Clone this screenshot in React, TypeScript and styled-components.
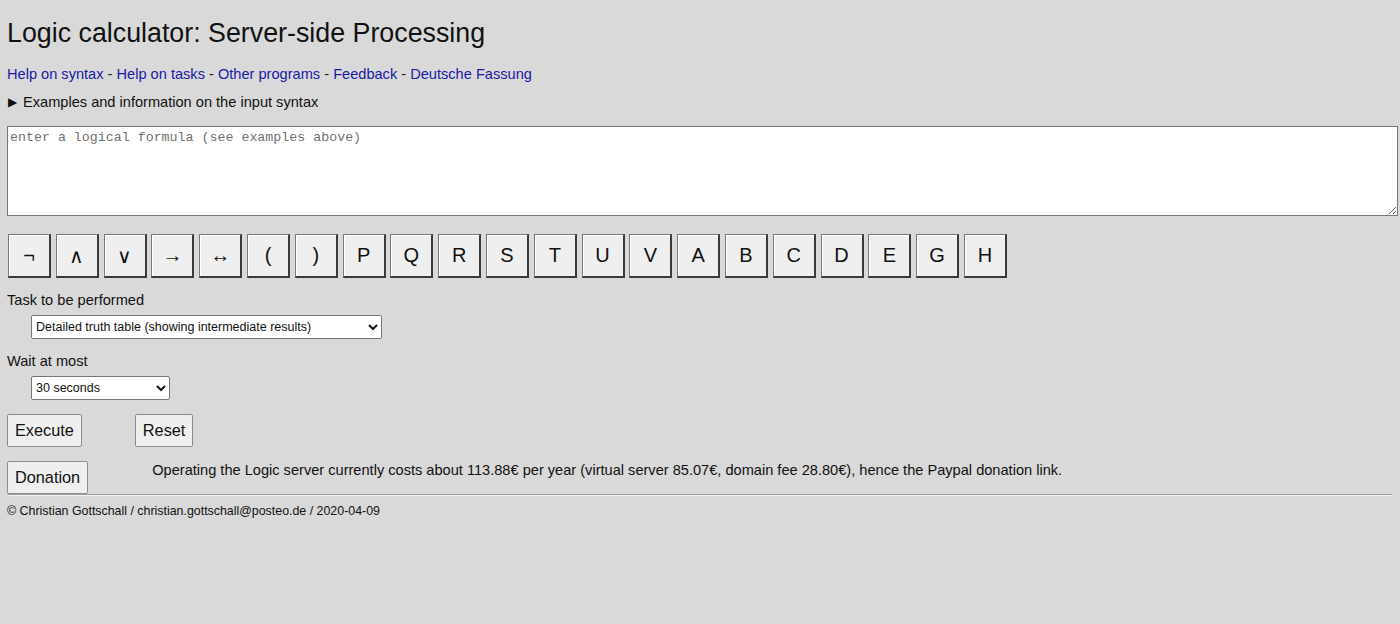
import React from "react";
import styled, { createGlobalStyle } from "styled-components";

const Global = createGlobalStyle`
  html, body { margin: 0; padding: 0; background: #d9d9d9; }
  body { font-family: "Liberation Sans", Arial, sans-serif; color: #111; }
`;

const Page = styled.div`
  padding: 17px 2px 20px 7px;
  display: flex;
  flex-direction: column;
`;

const Title = styled.h1`
  margin: 0;
  font-size: 26.8px;
  font-weight: normal;
  line-height: 32px;
  color: #111;
`;

const Links = styled.div`
  margin-top: 16px;
  font-size: 14.6px;
  line-height: 18px;
  color: #222;
`;

const A = styled.a`
  color: #1a1aa6;
  text-decoration: none;
`;

const Summary = styled.div`
  margin-top: 10px;
  font-size: 14.6px;
  line-height: 18px;
  display: flex;
  align-items: center;
  gap: 6px;
  padding-left: 1px;
`;

const Tri = styled.span`
  font-size: 11.5px;
  line-height: 18px;
  color: #111;
`;

const Area = styled.textarea`
  margin-top: 15px;
  height: 90px;
  box-sizing: border-box;
  width: 100%;
  border: 1px solid #767676;
  background: #fff;
  padding: 3px 2px;
  font-family: "Liberation Mono", "DejaVu Sans Mono", monospace;
  font-size: 13.3px;
  line-height: 16px;
  resize: vertical;
  &::placeholder { color: #6f6f6f; }
`;

const Keys = styled.div`
  margin-top: 18px;
  display: flex;
  gap: 4.8px;
  padding-left: 1px;
`;

const Key = styled.button`
  width: 43px;
  height: 44px;
  box-sizing: border-box;
  background: #efefef;
  border-style: solid;
  border-width: 1px 2px 2px 1px;
  border-color: #7a7a7a #3a3a3a #3a3a3a #7a7a7a;
  box-shadow: inset 1px 1px 0 #fff;
  font-family: "Liberation Sans", Arial, sans-serif;
  font-size: 20px;
  color: #111;
  padding: 0;
  display: flex;
  align-items: center;
  justify-content: center;
`;

const Label = styled.div`
  margin-top: 13px;
  font-size: 14.6px;
  line-height: 18px;
`;

const Select = styled.select<{ $w: number }>`
  margin: 6px 0 0 24px;
  width: ${(p) => p.$w}px;
  height: 24px;
  box-sizing: border-box;
  font-family: "Liberation Sans", Arial, sans-serif;
  font-size: 12.5px;
  border: 1px solid #767676;
  border-radius: 2px;
  background: #fff;
  color: #111;
  padding: 0;
`;

const Row = styled.div<{ $gap: number; $top: number }>`
  margin-top: ${(p) => p.$top}px;
  display: flex;
  align-items: flex-start;
  gap: ${(p) => p.$gap}px;
`;

const Btn = styled.button`
  height: 33px;
  box-sizing: border-box;
  background: #efefef;
  border: 1px solid #8d8d8d;
  border-radius: 2px;
  padding: 0 7px;
  font-family: "Liberation Sans", Arial, sans-serif;
  font-size: 16.3px;
  color: #111;
`;

const Note = styled.div`
  font-size: 14.6px;
  line-height: 18px;
`;

const Rule = styled.hr`
  margin: 0 6px 0 0;
  border: none;
  border-top: 1px solid #a0a0a0;
  border-bottom: 1px solid #eeeeee;
`;

const Footer = styled.div`
  margin-top: 7px;
  font-size: 12.4px;
  line-height: 16px;
`;

const keys = ["¬", "∧", "∨", "→", "↔", "(", ")", "P", "Q", "R", "S", "T", "U", "V", "A", "B", "C", "D", "E", "G", "H"];

export default function App() {
  return (
    <>
      <Global />
      <Page>
        <Title>Logic calculator: Server-side Processing</Title>
        <Links>
          <A href="#">Help on syntax</A> - <A href="#">Help on tasks</A> - <A href="#">Other programs</A> -{" "}
          <A href="#">Feedback</A> - <A href="#">Deutsche Fassung</A>
        </Links>
        <Summary>
          <Tri>▶</Tri>
          <span>Examples and information on the input syntax</span>
        </Summary>
        <Area placeholder="enter a logical formula (see examples above)" />
        <Keys>
          {keys.map((k) => (
            <Key key={k}>{k}</Key>
          ))}
        </Keys>
        <Label>Task to be performed</Label>
        <div>
          <Select $w={351} defaultValue="d">
            <option value="d">Detailed truth table (showing intermediate results)</option>
          </Select>
        </div>
        <Label>Wait at most</Label>
        <div>
          <Select $w={139} defaultValue="30">
            <option value="30">30 seconds</option>
          </Select>
        </div>
        <Row $gap={53} $top={14}>
          <Btn>Execute</Btn>
          <Btn>Reset</Btn>
        </Row>
        <Row $gap={64} $top={14}>
          <Btn>Donation</Btn>
          <Note>
            Operating the Logic server currently costs about 113.88€ per year (virtual server 85.07€, domain fee
            28.80€), hence the Paypal donation link.
          </Note>
        </Row>
        <Rule />
        <Footer>© Christian Gottschall / christian.gottschall@posteo.de / 2020-04-09</Footer>
      </Page>
    </>
  );
}
